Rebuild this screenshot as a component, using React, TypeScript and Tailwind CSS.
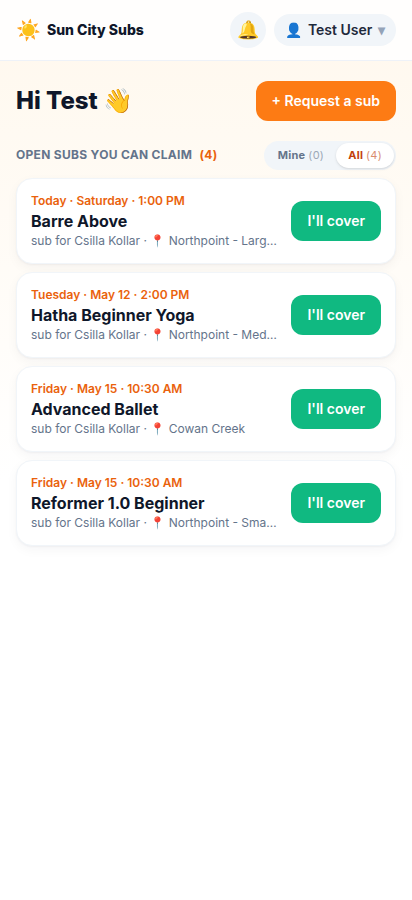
const subs = [
  { when: 'Today · Saturday · 1:00 PM', name: 'Barre Above', place: 'Northpoint - Large Studio' },
  { when: 'Tuesday · May 12 · 2:00 PM', name: 'Hatha Beginner Yoga', place: 'Northpoint - Medium Studio' },
  { when: 'Friday · May 15 · 10:30 AM', name: 'Advanced Ballet', place: 'Cowan Creek' },
  { when: 'Friday · May 15 · 10:30 AM', name: 'Reformer 1.0 Beginner', place: 'Northpoint - Small Studio' },
];

export default function App() {
  return (
    <div className="min-h-screen bg-linear-to-b from-[#fff8ed] to-white to-[480px] font-[Inter,'Noto_Color_Emoji',sans-serif] text-[#0f172a]">
      <header className="flex h-[61px] items-center justify-between border-b border-[#eef2f8] bg-white/90 px-4">
        <div className="flex items-center gap-1.5">
          <span className="text-xl leading-7">☀️</span>
          <span className="text-sm font-extrabold">Sun City Subs</span>
        </div>
        <div className="flex items-center gap-2">
          <button className="flex size-9 items-center justify-center rounded-full bg-[#f1f5f9] pl-0.5 text-lg">🔔</button>
          <button className="flex h-8 w-[122px] items-center gap-[5.5px] rounded-full bg-[#f1f5f9] pr-2.5 pl-[11px] text-sm font-semibold text-[#1e293b]">
            <span>👤</span><span>Test User</span><span className="text-[#94a3b8]">▾</span>
          </button>
        </div>
      </header>
      <main className="px-4 pt-5">
        <div className="flex items-center justify-between">
          <h1 className="text-2xl font-extrabold">Hi Test 👋</h1>
          <button className="h-10 rounded-xl bg-[#fd7b14] px-4 text-sm font-semibold text-white">+ Request a sub</button>
        </div>
        <div className="mt-5 flex items-center justify-between">
          <h2 className="-mt-0.5 text-xs font-bold tracking-wide text-[#64748b]">OPEN SUBS YOU CAN CLAIM <span className="ml-1 text-[#ea620c]">(4)</span></h2>
          <div className="flex rounded-full bg-[#f1f5f9] p-0.5 text-[11px] font-bold tracking-wide">
            <button className="h-[25px] rounded-full px-3 text-[#64748b]">Mine <span className="font-normal opacity-60">(0)</span></button>
            <button className="h-[25px] rounded-full bg-white px-3 text-[#c2410c] shadow-sm">All <span className="font-normal opacity-60">(4)</span></button>
          </div>
        </div>
        <ul className="mt-2 flex flex-col gap-2">
          {subs.map((sub) => (
            <li key={sub.name} className="flex h-[86px] items-center gap-3 rounded-2xl border border-[#f1f5f9] bg-white px-3.5 shadow-[0_1px_2px_rgba(15,23,42,0.04),0_4px_12px_rgba(15,23,42,0.04)]">
              <div className="min-w-0 flex-1">
                <div className="text-xs font-semibold text-[#ea620c]">{sub.when}</div>
                <div className="text-base font-bold">{sub.name}</div>
                <div className="truncate text-xs text-[#64748b]">sub for Csilla Kollar · 📍 {sub.place}</div>
              </div>
              <button className="h-10 shrink-0 rounded-xl bg-[#10b981] px-4 text-sm font-semibold text-white">I'll cover</button>
            </li>
          ))}
        </ul>
      </main>
    </div>
  );
}
